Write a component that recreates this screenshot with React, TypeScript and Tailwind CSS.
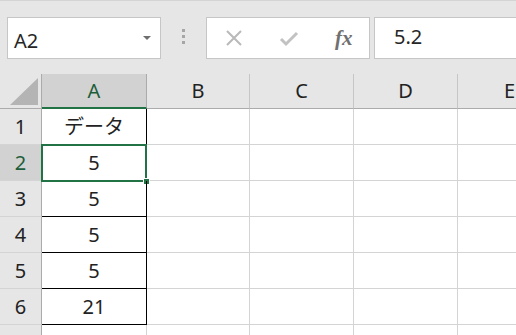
import React from 'react';

const cols = ['A', 'B', 'C', 'D', 'E'];
const rows: { n: number; a: string }[] = [
  { n: 1, a: 'データ' },
  { n: 2, a: '5' },
  { n: 3, a: '5' },
  { n: 4, a: '5' },
  { n: 5, a: '5' },
  { n: 6, a: '21' },
];

const font = { fontFamily: '"Noto Sans", "Noto Sans CJK JP", sans-serif' };

function Toolbar() {
  return (
    <div className="h-[74px] bg-[#e6e6e6] border-t border-[#d4d4d4] flex items-start pt-[16px] pl-[7px]">
      {/* name box */}
      <div className="w-[154px] h-[42px] bg-white border border-[#c6c6c6] flex items-center justify-between pl-[6px] pr-[9px]">
        <span className="text-[20px] leading-none text-[#262626] mt-[5px]">A2</span>
        <span className="w-0 h-0 border-l-[4px] border-r-[4px] border-t-[4px] border-l-transparent border-r-transparent border-t-[#6e6e6e]" />
      </div>
      {/* grip dots */}
      <div className="w-[45px] h-[42px] flex flex-col items-center justify-center gap-[3px] pb-[3px]">
        <span className="w-[3px] h-[3px] bg-[#a6a6a6]" />
        <span className="w-[3px] h-[3px] bg-[#a6a6a6]" />
        <span className="w-[3px] h-[3px] bg-[#a6a6a6]" />
      </div>
      {/* cancel / enter / fx */}
      <div className="w-[164px] h-[42px] bg-white border border-[#c6c6c6] flex items-center">
        <svg width="18" height="18" viewBox="0 0 18 18" className="ml-[18px]">
          <path d="M2 2 L16 16 M16 2 L2 16" stroke="#b9b9b9" strokeWidth="2" fill="none" />
        </svg>
        <svg width="20" height="16" viewBox="0 0 20 16" className="ml-[36px] mt-[2px]">
          <path d="M2 8 L7 13 L18 2" stroke="#c2c2c2" strokeWidth="3" fill="none" />
        </svg>
        <span
          className="ml-[36px] mt-[1px] text-[21px] leading-none italic font-bold text-[#707070]"
          style={{ fontFamily: '"Liberation Serif", serif' }}
        >
          fx
        </span>
      </div>
      {/* formula bar */}
      <div className="ml-[4px] flex-1 h-[42px] bg-white border border-[#c6c6c6] border-r-0 flex items-center pl-[19px]">
        <span className="text-[20px] leading-none text-[#262626] mb-[2px]">5.2</span>
      </div>
    </div>
  );
}

export default function App() {
  return (
    <div className="w-[516px] h-[335px] overflow-hidden bg-white" style={font}>
      <Toolbar />
      <div className="w-[562px] grid grid-cols-[42px_105px_103px_104px_104px_104px] grid-rows-[35px_repeat(6,36px)_1fr] h-[261px] text-[20px] text-[#222]">
        {/* corner */}
        <div className="bg-[#e6e6e6] border-r border-b border-[#ababab] flex items-end justify-end pr-[3px] pb-[3px]">
          <svg width="28" height="27" viewBox="0 0 28 27">
            <path d="M28 0 L28 27 L0 27 Z" fill="#b4b4b4" />
          </svg>
        </div>
        {cols.map((c, i) =>
          i === 0 ? (
            <div
              key={c}
              className="bg-[#d2d2d2] border-r border-[#ababab] border-b-2 border-b-[#217346] flex items-center justify-center text-[#1d5e3a] leading-none"
            >
              {c}
            </div>
          ) : (
            <div
              key={c}
              className="bg-[#e6e6e6] border-r border-[#c6c6c6] border-b border-b-[#ababab] flex items-center justify-center leading-none"
            >
              {c}
            </div>
          )
        )}
        {rows.map((r) => (
          <React.Fragment key={r.n}>
            <div
              className={
                r.n === 2
                  ? 'bg-[#d2d2d2] border-r border-[#ababab] border-b border-b-[#d4d4d4] flex items-center justify-center text-[#1d5e3a] leading-none'
                  : 'bg-[#e6e6e6] border-r border-[#ababab] border-b border-b-[#d4d4d4] flex items-center justify-center leading-none'
              }
            >
              {r.n}
            </div>
            <div className="relative border-r border-b border-black flex items-center justify-center leading-none">
              {r.a}
              {r.n === 2 && (
                <>
                  <div className="absolute -left-[1px] -top-[1px] -right-[1px] -bottom-[2px] border-2 border-[#217346]" />
                  <div className="absolute -right-[4px] -bottom-[5px] w-[7px] h-[7px] bg-[#217346] border border-white" />
                </>
              )}
            </div>
            {cols.slice(1).map((c) => (
              <div key={c} className="border-r border-b border-[#d4d4d4]" />
            ))}
          </React.Fragment>
        ))}
        <div className="bg-[#e6e6e6] border-r border-[#ababab]" />
        {cols.map((c) => (
          <div key={c} className="border-r border-[#d4d4d4]" />
        ))}
      </div>
    </div>
  );
}
